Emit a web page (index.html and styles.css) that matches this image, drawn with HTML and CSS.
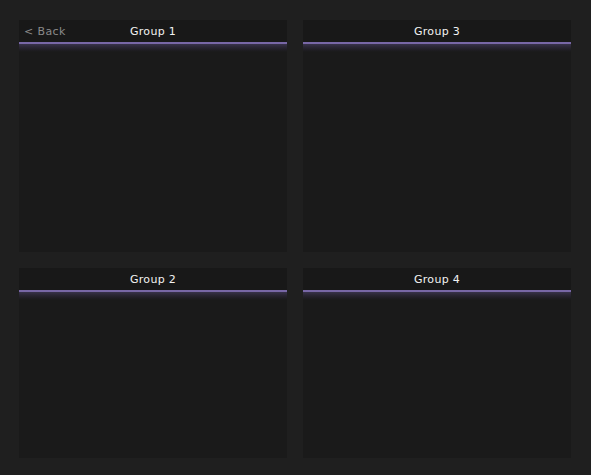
FILE: index.html
```html
<!DOCTYPE html>
<html>
<head>
<meta charset="utf-8">
<link rel="stylesheet" href="styles.css">
</head>
<body>
<div class="grid">
  <section class="panel">
    <header class="head"><span class="back">&lt; Back</span><span class="title">Group 1</span></header>
    <div class="body"></div>
  </section>
  <section class="panel">
    <header class="head"><span class="title">Group 3</span></header>
    <div class="body"></div>
  </section>
  <section class="panel">
    <header class="head"><span class="title">Group 2</span></header>
    <div class="body"></div>
  </section>
  <section class="panel">
    <header class="head"><span class="title">Group 4</span></header>
    <div class="body"></div>
  </section>
</div>
</body>
</html>
```
FILE: styles.css
```css
html, body {
  margin: 0;
  padding: 0;
  background: #1f1f1f;
  width: 591px;
  height: 475px;
  overflow: hidden;
  font-family: "DejaVu Sans", Verdana, sans-serif;
}
.grid {
  display: grid;
  grid-template-columns: 268px 268px;
  grid-template-rows: 232px 190px;
  column-gap: 16px;
  row-gap: 16px;
  padding: 20px 20px 0 19px;
}
.panel {
  background: #1a1a1a;
  display: flex;
  flex-direction: column;
}
.head {
  position: relative;
  height: 22px;
  background: #181818;
  border-bottom: 2px solid #7867a6;
  display: flex;
  align-items: center;
  justify-content: center;
}
.title {
  color: #f2f2f2;
  font-size: 11px;
  letter-spacing: 0.3px;
  padding-top: 1px;
}
.back {
  position: absolute;
  left: 5px;
  top: 5px;
  color: #8a8a8a;
  font-size: 11px;
  letter-spacing: 0.4px;
}
.body {
  flex: 1;
  background: linear-gradient(to bottom, #38324a 0px, #2a2634 3px, #1f1d23 6px, #1a1a1a 8px);
}
```
